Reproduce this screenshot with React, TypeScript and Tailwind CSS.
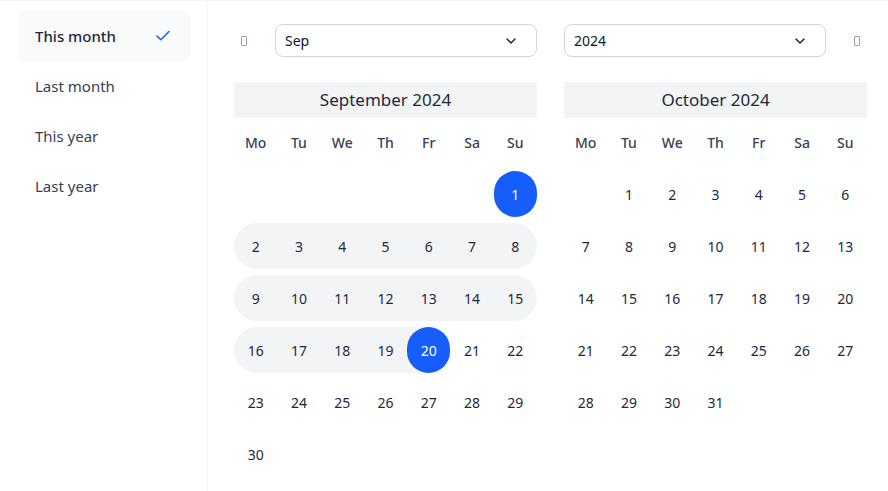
import React from "react";
import { ChevronDown, Check } from "lucide-react";

const weekdays = ["Mo", "Tu", "We", "Th", "Fr", "Sa", "Su"];

type Cell = { day: number | null; inRange?: boolean; selected?: boolean; first?: boolean; last?: boolean };

// builds week rows, offset = number of empty cells before day 1 (Monday first)
const buildWeeks = (offset: number, days: number, rangeStart?: number, rangeEnd?: number) => {
    const cells: Cell[] = [];
    for (let i = 0; i < offset; i++) cells.push({ day: null });
    for (let d = 1; d <= days; d++) {
        const inRange = rangeStart !== undefined && rangeEnd !== undefined && d >= rangeStart && d <= rangeEnd;
        cells.push({
            day: d,
            inRange,
            selected: d === rangeStart || d === rangeEnd,
            first: d === rangeStart,
            last: d === rangeEnd,
        });
    }
    const weeks: Cell[][] = [];
    for (let i = 0; i < cells.length; i += 7) weeks.push(cells.slice(i, i + 7));
    return weeks;
};

const Tofu = () => <span className="block w-[6px] h-[10px] border border-gray-400 rounded-[1px]" />;

const Select = ({ value }: { value: string }) => (
    <div className="w-[262px] h-[33px] flex items-center justify-between pl-[9px] pr-[17px] border border-gray-300 rounded-lg bg-white text-[14px] text-gray-900">
        <span>{value}</span>
        <ChevronDown className="w-[16px] h-[16px] text-gray-800" strokeWidth={2.2} />
    </div>
);

const MonthGrid = ({ title, weeks }: { title: string; weeks: Cell[][] }) => (
    <div className="w-[303px]">
        <div className="h-[36px] bg-gray-100 flex items-center justify-center text-[17px] text-gray-800">{title}</div>
        <div className="mt-px flex flex-col gap-[6px]">
            <div className="grid grid-cols-7 h-[46px] items-center text-center text-[14px] font-medium text-gray-700">
                {weekdays.map((w) => (
                    <span key={w}>{w}</span>
                ))}
            </div>
            {weeks.map((week, wi) => (
                <div key={wi} className="grid grid-cols-7 h-[46px]">
                    {week.map((c, ci) => {
                        const roundL = c.inRange && (ci === 0 || c.first);
                        const roundR = c.inRange && (ci === 6 || c.last);
                        return (
                            <div
                                key={ci}
                                className={`flex items-center justify-center text-[14px] text-gray-800 ${c.inRange ? "bg-gray-100" : ""} ${roundL ? "rounded-l-full" : ""} ${roundR ? "rounded-r-full" : ""}`}
                            >
                                {c.day !== null &&
                                    (c.selected ? (
                                        <span className="w-full h-full rounded-full bg-[#155dfc] text-white flex items-center justify-center">
                                            {c.day}
                                        </span>
                                    ) : (
                                        <span>{c.day}</span>
                                    ))}
                            </div>
                        );
                    })}
                </div>
            ))}
        </div>
    </div>
);

const App = () => {
    const sidebar = ["This month", "Last month", "This year", "Last year"];
    const sep = buildWeeks(6, 30, 1, 20);
    const oct = buildWeeks(1, 31);

    return (
        <div className="w-[888px] h-[491px] bg-white border-t border-gray-100 flex overflow-hidden" style={{ fontFamily: '"Noto Sans", "Open Sans", sans-serif' }}>
            <div className="w-[208px] shrink-0 border-r border-gray-100 pt-[10px] px-[17px] flex flex-col">
                {sidebar.map((s, i) => (
                    <div
                        key={s}
                        className={`h-[50px] flex items-center justify-between pl-[18px] pr-[18px] rounded-lg text-[15px] ${i === 0 ? "bg-gray-50 font-medium text-gray-800" : "text-gray-700"}`}
                    >
                        <span>{s}</span>
                        {i === 0 && <Check className="w-[18px] h-[18px] text-[#155dfc]" strokeWidth={2} />}
                    </div>
                ))}
            </div>
            <div className="flex-1 pl-[26px] pt-[23px] flex gap-[27px]">
                <div className="flex flex-col">
                    <div className="flex items-center h-[33px]">
                        <div className="w-[41px] pl-[7px]">
                            <Tofu />
                        </div>
                        <Select value="Sep" />
                    </div>
                    <div className="mt-[25px]">
                        <MonthGrid title="September 2024" weeks={sep} />
                    </div>
                </div>
                <div className="flex flex-col">
                    <div className="flex items-center h-[33px]">
                        <Select value="2024" />
                        <div className="w-[41px] flex justify-end pr-[7px]">
                            <Tofu />
                        </div>
                    </div>
                    <div className="mt-[25px]">
                        <MonthGrid title="October 2024" weeks={oct} />
                    </div>
                </div>
            </div>
        </div>
    );
};

export default App;
